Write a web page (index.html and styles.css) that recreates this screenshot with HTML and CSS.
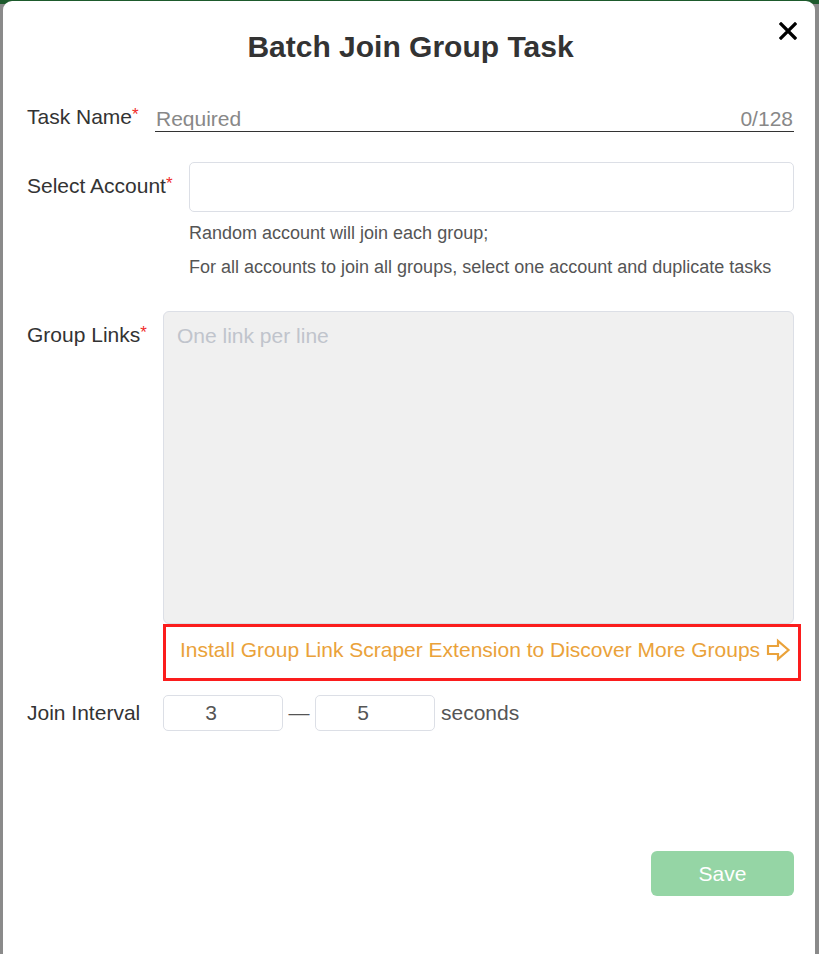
FILE: index.html
```html
<!DOCTYPE html>
<html lang="en">
<head>
    <meta charset="UTF-8">
    <meta name="viewport" content="width=device-width, initial-scale=1.0">
    <title>Batch Join Group Task</title>
    <link rel="stylesheet" href="styles.css">
</head>
<body>
    <div class="modal">
        <div class="modal-header">
            <h2>Batch Join Group Task</h2>
            <button class="close-btn" aria-label="Close">
                <svg width="18" height="18" viewBox="0 0 18 18">
                    <path d="M2 2 L16 16 M16 2 L2 16" stroke="#000" stroke-width="3.2" stroke-linecap="square"/>
                </svg>
            </button>
        </div>

        <div class="row row-task">
            <label class="label label-task">Task Name<span class="req">*</span></label>
            <div class="line-input">
                <span class="placeholder">Required</span>
                <span class="counter">0/128</span>
            </div>
        </div>

        <div class="row row-account">
            <label class="label label-account">Select Account<span class="req">*</span></label>
            <div class="field">
                <div class="select-box"></div>
                <p class="help">Random account will join each group;</p>
                <p class="help">For all accounts to join all groups, select one account and duplicate tasks</p>
            </div>
        </div>

        <div class="row row-links">
            <label class="label label-links">Group Links<span class="req">*</span></label>
            <div class="field">
                <div class="links-box">One link per line</div>
                <div class="scraper-tip">
                    <span>Install Group Link Scraper Extension to Discover More Groups</span>
                    <svg width="25" height="24" viewBox="0 0 25 24">
                        <path d="M2 8 H12 V3 L22.5 12 L12 21 V16 H2 Z" fill="none" stroke="#eaa23a" stroke-width="2.2" stroke-linejoin="miter"/>
                    </svg>
                </div>
            </div>
        </div>

        <div class="row row-interval">
            <label class="label label-links">Join Interval</label>
            <div class="interval">
                <div class="num-box">3</div>
                <span class="dash">—</span>
                <div class="num-box">5</div>
                <span class="unit">seconds</span>
            </div>
        </div>

        <div class="footer">
            <button class="save-btn">Save</button>
        </div>
    </div>
</body>
</html>
```

FILE: styles.css
```css
body {
    margin: 0;
    height: 954px;
    overflow: hidden;
    font-family: "Liberation Sans", Arial, sans-serif;
    background: linear-gradient(to bottom, #1d5a2c 0, #1d5a2c 4px, #8a8a8a 4px, #8a8a8a 100%);
}
.modal {
    position: relative;
    margin: 1px 4px 0 3px;
    height: 953px;
    background: #fff;
    border-radius: 9px 9px 0 0;
    padding: 0 21px 0 24px;
    box-sizing: border-box;
    color: #333;
}
.modal-header {
    height: 94px;
    display: flex;
    align-items: center;
    justify-content: center;
}
.modal-header h2 {
    margin: 0;
    font-size: 30px;
    font-weight: bold;
    color: #333;
    padding-bottom: 2px;
}
.close-btn {
    position: absolute;
    top: 21px;
    right: 18px;
    border: none;
    background: none;
    padding: 0;
    cursor: pointer;
}
.row {
    display: flex;
}
.label {
    font-size: 21px;
    line-height: 24px;
    color: #333;
    flex-shrink: 0;
}
.req {
    color: #f02b2b;
    font-size: 17px;
    vertical-align: top;
    position: relative;
    top: -2px;
}
.label-task {
    width: 128px;
}
.label-account {
    width: 162px;
}
.label-links {
    width: 136px;
}
.row-task {
    height: 37px;
    align-items: flex-end;
}
.row-task .label {
    padding-bottom: 3px;
}
.line-input {
    flex: 1;
    display: flex;
    justify-content: space-between;
    border-bottom: 1px solid #333;
    font-size: 21px;
    line-height: 24px;
    padding: 0 1px 0 1px;
    color: #888;
}
.row-account {
    margin-top: 30px;
}
.row-account .label {
    padding-top: 12px;
}
.field {
    flex: 1;
}
.select-box {
    height: 48px;
    border: 1px solid #dcdfe6;
    border-radius: 5px;
}
.help {
    margin: 0;
    font-size: 18px;
    line-height: 34px;
    color: #555;
}
.help:first-of-type {
    margin-top: 4px;
}
.row-links {
    margin-top: 27px;
}
.row-links .label {
    padding-top: 12px;
}
.links-box {
    height: 287px;
    background: #f0f0f0;
    border: 1px solid #dcdfe6;
    border-radius: 6px;
    padding: 12px 13px;
    font-size: 21px;
    line-height: 24px;
    color: #c0c4cc;
}
.scraper-tip {
    margin-right: -7px;
    height: 45px;
    border: 3px solid #fb1d1d;
    display: flex;
    align-items: center;
    justify-content: space-between;
    padding: 0 7px 6px 14px;
    font-size: 21px;
    color: #eaa23a;
}
.row-interval {
    margin-top: 14px;
    align-items: center;
}
.interval {
    display: flex;
    align-items: center;
}
.num-box {
    width: 94px;
    height: 34px;
    padding-right: 24px;
    border: 1px solid #dcdfe6;
    border-radius: 5px;
    text-align: center;
    font-size: 21px;
    line-height: 34px;
    color: #555;
}
.dash {
    width: 32px;
    text-align: center;
    font-size: 21px;
    color: #555;
}
.unit {
    margin-left: 6px;
    font-size: 21px;
    color: #555;
}
.footer {
    display: flex;
    justify-content: flex-end;
    margin-top: 120px;
}
.save-btn {
    width: 143px;
    height: 45px;
    border: none;
    border-radius: 6px;
    background: #95d5a5;
    color: #fff;
    font-family: "Liberation Sans", Arial, sans-serif;
    font-size: 21px;
    cursor: pointer;
}
```
